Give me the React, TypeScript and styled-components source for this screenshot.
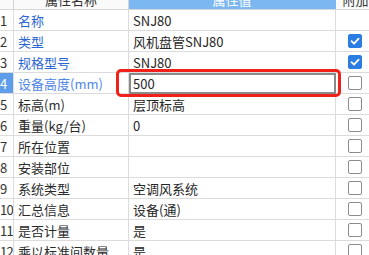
import { createGlobalStyle, styled } from 'styled-components';

const GlobalStyle = createGlobalStyle`
    html, body {
        margin: 0;
        padding: 0;
        background: #ffffff;
        overflow: hidden;
    }
    body {
        font-family: "Noto Sans CJK SC", "Noto Sans", sans-serif;
        font-size: 13px;
        color: #262626;
    }
`;

const COLUMNS = '14px 115px 207px 40px';

const Grid = styled.div`
    width: 369px;
    height: 255px;
    overflow: hidden;
`;

const Inner = styled.div`
    margin-top: -11px;
    width: 376px;
`;

const HeaderRow = styled.div`
    display: grid;
    grid-template-columns: ${COLUMNS};
    height: 21px;
    border-bottom: 1px solid #d6d6d6;
    box-sizing: border-box;
`;

const HeaderCell = styled.div<{ $accent?: boolean }>`
    display: flex;
    align-items: center;
    justify-content: center;
    background: ${(p) => (p.$accent ? '#7db7f2' : '#fafafa')};
    color: ${(p) => (p.$accent ? '#ffffff' : '#333333')};
    border-right: 1px solid ${(p) => (p.$accent ? '#7db7f2' : '#d6d6d6')};
    box-sizing: border-box;
    white-space: nowrap;
    overflow: hidden;
`;

const Row = styled.div`
    display: grid;
    grid-template-columns: ${COLUMNS};
    height: 21px;
    border-bottom: 1px solid #dcdcdc;
    box-sizing: border-box;
`;

const Cell = styled.div`
    position: relative;
    display: flex;
    align-items: center;
    padding-left: 4px;
    border-right: 1px solid #dcdcdc;
    box-sizing: border-box;
    white-space: nowrap;
`;

const NumCell = styled(Cell)<{ $current?: boolean }>`
    padding-left: 0;
    letter-spacing: -0.8px;
    overflow: hidden;
    background: ${(p) => (p.$current ? '#5d9de9' : 'transparent')};
    color: ${(p) => (p.$current ? '#ffffff' : '#333333')};
`;

const NameCell = styled(Cell)<{ $tone?: 'key' | 'current' }>`
    color: ${(p) =>
        p.$tone === 'key' ? '#2c66d3' : p.$tone === 'current' ? '#4d86e6' : '#2b2b2b'};
`;

const CheckCell = styled(Cell)`
    padding-left: 12px;
`;

const Editor = styled.div`
    position: absolute;
    left: 0;
    top: 0;
    right: -1px;
    bottom: -1px;
    display: flex;
    align-items: center;
    padding-left: 2px;
    border: 2px solid #8a8a8a;
    background: #ffffff;
    box-sizing: border-box;
`;

const Highlight = styled.div`
    position: absolute;
    left: -13px;
    top: -4px;
    right: -6px;
    bottom: -4px;
    border: 3px solid #f0211b;
    border-radius: 5px;
    z-index: 2;
    pointer-events: none;
`;

const Box = styled.div<{ $checked?: boolean }>`
    width: 14px;
    height: 14px;
    box-sizing: border-box;
    border-radius: 2px;
    border: 1px solid ${(p) => (p.$checked ? '#2b7de3' : '#8c8c8c')};
    background: ${(p) => (p.$checked ? '#2b7de3' : '#ffffff')};
    display: flex;
    align-items: center;
    justify-content: center;
`;

type Prop = {
    name: string;
    value: string;
    tone?: 'key' | 'current';
    check?: boolean;
    editing?: boolean;
};

const props: Prop[] = [
    { name: '名称', value: 'SNJ80', tone: 'key' },
    { name: '类型', value: '风机盘管SNJ80', tone: 'key', check: true },
    { name: '规格型号', value: 'SNJ80', tone: 'key', check: true },
    { name: '设备高度(mm)', value: '500', tone: 'current', check: false, editing: true },
    { name: '标高(m)', value: '层顶标高', check: false },
    { name: '重量(kg/台)', value: '0', check: false },
    { name: '所在位置', value: '', check: false },
    { name: '安装部位', value: '', check: false },
    { name: '系统类型', value: '空调风系统', check: false },
    { name: '汇总信息', value: '设备(通)', check: false },
    { name: '是否计量', value: '是', check: false },
    { name: '乘以标准间数量', value: '是', check: false },
];

const Checkbox = ({ checked }: { checked: boolean }) => (
    <Box $checked={checked}>
        {checked && (
            <svg width="10" height="10" viewBox="0 0 10 10">
                <polyline
                    points="1.5,5.2 4,7.6 8.6,2.6"
                    fill="none"
                    stroke="#ffffff"
                    strokeWidth="1.8"
                    strokeLinecap="round"
                    strokeLinejoin="round"
                />
            </svg>
        )}
    </Box>
);

const App = () => (
    <>
        <GlobalStyle />
        <Grid>
            <Inner>
                <HeaderRow>
                    <HeaderCell />
                    <HeaderCell>属性名称</HeaderCell>
                    <HeaderCell $accent>属性值</HeaderCell>
                    <HeaderCell>附加</HeaderCell>
                </HeaderRow>
                {props.map((p, index) => (
                    <Row key={index}>
                        <NumCell $current={p.editing}>{index + 1}</NumCell>
                        <NameCell $tone={p.tone}>{p.name}</NameCell>
                        <Cell>
                            {p.editing ? (
                                <>
                                    <Editor>{p.value}</Editor>
                                    <Highlight />
                                </>
                            ) : (
                                p.value
                            )}
                        </Cell>
                        <CheckCell>
                            {p.check !== undefined && <Checkbox checked={p.check} />}
                        </CheckCell>
                    </Row>
                ))}
            </Inner>
        </Grid>
    </>
);

export default App;
